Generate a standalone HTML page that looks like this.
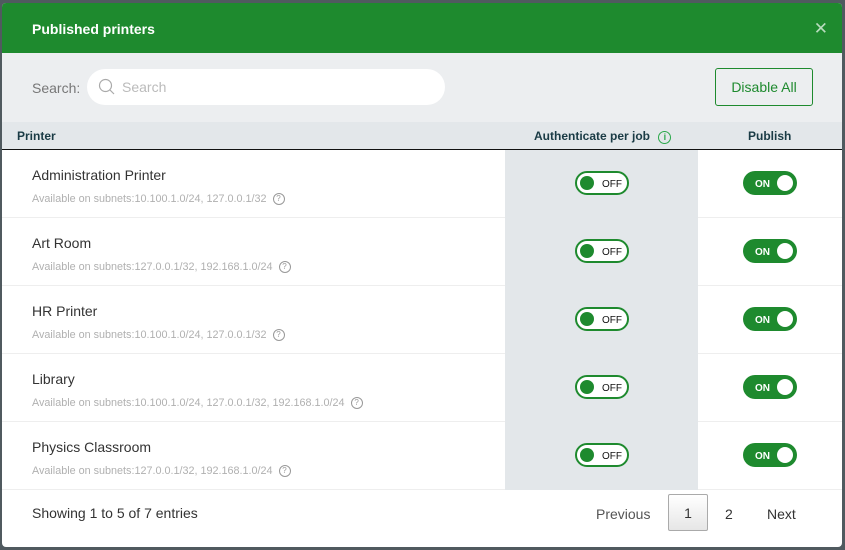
<!DOCTYPE html>
<html><head><style>
*{box-sizing:border-box;margin:0;padding:0}
body{width:845px;height:550px;background:#505a5f;font-family:"Liberation Sans",sans-serif;position:relative;overflow:hidden}
.m{position:absolute;left:2px;top:3px;width:840px;height:544px;background:#fff;border-radius:4px;overflow:hidden}
.hd{height:50px;background:#1e8a2e;color:#fff;font-weight:bold;font-size:14px;line-height:52px;padding-left:30px;position:relative}
.x{position:absolute;right:14px;top:0;font-weight:normal;font-size:17px;color:#b9dcbe}
.sr{height:69px;background:#eceef0;position:relative}
.sr .l{position:absolute;left:30px;top:27px;font-size:14px;color:#777}
.in{position:absolute;left:85px;top:16px;width:358px;height:36px;background:#fff;border-radius:18px}
.in span{position:absolute;left:35px;top:10px;font-size:14px;color:#bbb}
.btn{position:absolute;left:713px;top:15px;width:98px;height:38px;border:1px solid #1e8a2e;border-radius:3px;color:#1e8a2e;font-size:14px;text-align:center;line-height:36px}
.th{height:28px;background:#e3e7ea;border-bottom:1px solid #111;position:relative;font-weight:bold;font-size:12px;color:#1a3b45}
.th div{position:absolute;top:7px}
.row{height:68px;border-bottom:1px solid #eee;position:relative}
.auth{position:absolute;left:503px;top:0;width:193px;height:68px;background:#e3e7ea}
.n{position:absolute;left:30px;top:17px;font-size:14px;color:#333}
.s{position:absolute;left:30px;top:43px;font-size:10.8px;color:#b0b0b0}
.q{display:inline-block;width:12px;height:12px;border:1px solid #999;border-radius:50%;font-size:8px;line-height:10px;text-align:center;color:#999;margin-left:6px;vertical-align:top}
.off{position:absolute;left:573px;top:21px;width:54px;height:24px;border:2px solid #1e8a2e;border-radius:12px;background:#fff;font-size:10px;color:#111;line-height:21px;padding-left:25px;padding-top:1px}
.off:before{content:"";position:absolute;left:3px;top:3px;width:14px;height:14px;border-radius:50%;background:#1e8a2e}
.on{position:absolute;left:741px;top:21px;width:54px;height:24px;border-radius:12px;background:#1e8a2e;font-size:10px;color:#fff;line-height:25px;padding-top:1px;padding-left:12px;font-weight:bold}
.on:after{content:"";position:absolute;right:4px;top:4px;width:16px;height:16px;border-radius:50%;background:#fff}
.ft{position:relative;height:57px}
.ft .t{position:absolute;left:30px;top:15px;font-size:14px;color:#333}
.pg{position:absolute;top:16px;font-size:14px;color:#555}
</style></head><body>
<div class="m">
<div class="hd">Published printers<span class="x">✕</span></div>
<div class="sr"><div class="l">Search:</div>
<div class="in"><svg style="position:absolute;left:11px;top:9px" width="18" height="18" viewBox="0 0 18 18"><circle cx="7.5" cy="7.5" r="6" fill="none" stroke="#aaa" stroke-width="1.2"/><line x1="12" y1="12" x2="16" y2="16" stroke="#aaa" stroke-width="1.2"/></svg><span>Search</span></div>
<div class="btn">Disable All</div></div>
<div class="th"><div style="left:532px">Authenticate per job <span style="display:inline-block;width:13px;height:13px;border:1.5px solid #2aa84a;border-radius:50%;color:#2aa84a;font-size:9px;line-height:10px;text-align:center;margin-left:5px">i</span></div><div style="left:15px">Printer</div><div style="left:746px">Publish</div></div>
<div class="row"><div class="auth"></div><div class="n">Administration Printer</div><div class="s">Available on subnets:10.100.1.0/24, 127.0.0.1/32<span class="q">?</span></div><div class="off">OFF</div><div class="on">ON</div></div>
<div class="row"><div class="auth"></div><div class="n">Art Room</div><div class="s">Available on subnets:127.0.0.1/32, 192.168.1.0/24<span class="q">?</span></div><div class="off">OFF</div><div class="on">ON</div></div>
<div class="row"><div class="auth"></div><div class="n">HR Printer</div><div class="s">Available on subnets:10.100.1.0/24, 127.0.0.1/32<span class="q">?</span></div><div class="off">OFF</div><div class="on">ON</div></div>
<div class="row"><div class="auth"></div><div class="n">Library</div><div class="s">Available on subnets:10.100.1.0/24, 127.0.0.1/32, 192.168.1.0/24<span class="q">?</span></div><div class="off">OFF</div><div class="on">ON</div></div>
<div class="row"><div class="auth"></div><div class="n">Physics Classroom</div><div class="s">Available on subnets:127.0.0.1/32, 192.168.1.0/24<span class="q">?</span></div><div class="off">OFF</div><div class="on">ON</div></div>
<div class="ft"><div class="t">Showing 1 to 5 of 7 entries</div>
<div class="pg" style="left:594px">Previous</div>
<div style="position:absolute;left:666px;top:4px;width:40px;height:37px;border:1px solid #aaa;border-radius:2px;background:linear-gradient(#fff,#e6e6e6);text-align:center;line-height:37px;font-size:14px;color:#333">1</div>
<div class="pg" style="left:723px;color:#333">2</div>
<div class="pg" style="left:765px;color:#333">Next</div></div>
</div>
</body></html>
